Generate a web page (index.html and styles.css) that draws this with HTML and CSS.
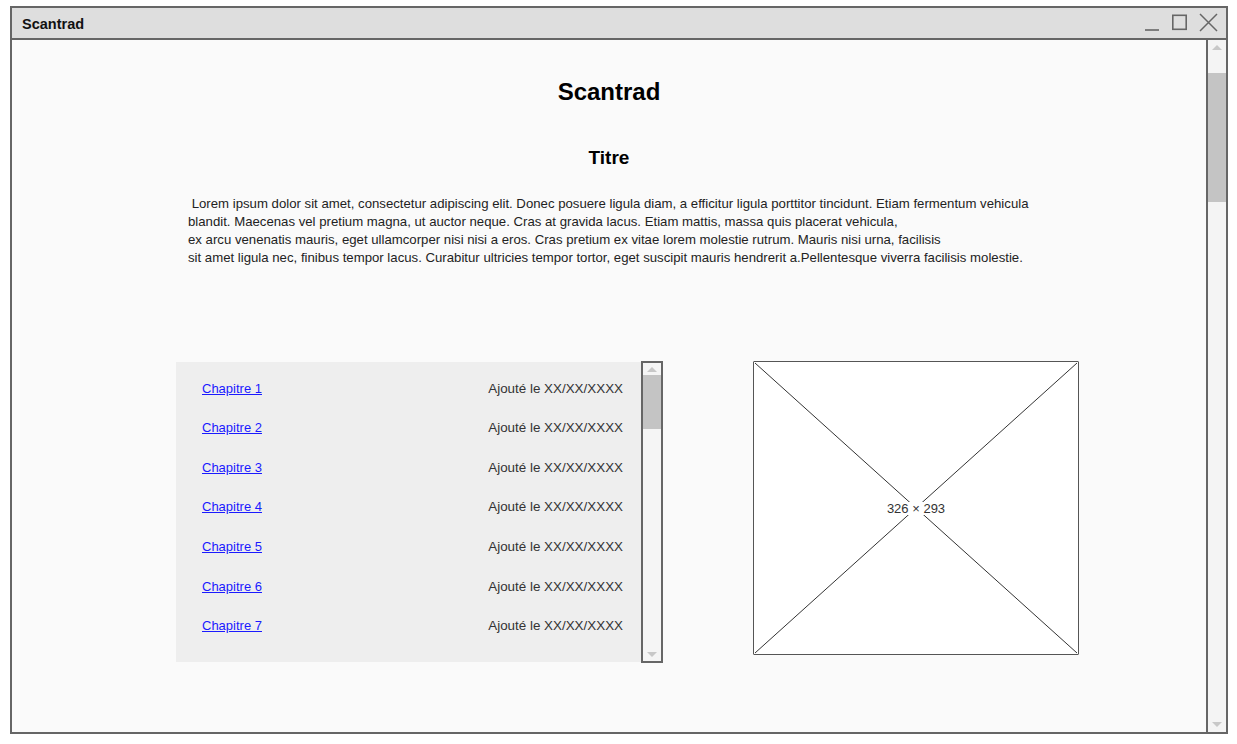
FILE: index.html
```html
<!DOCTYPE html>
<html lang="fr">
<head>
<meta charset="utf-8">
<title>Scantrad</title>
<link rel="stylesheet" href="styles.css">
</head>
<body>
<div class="window">
  <div class="titlebar">
    <span class="win-title">Scantrad</span>
    <svg class="controls" width="76" height="20" viewBox="0 0 76 20">
      <line x1="2" y1="17" x2="16" y2="17" stroke="#666" stroke-width="1.6"/>
      <rect x="29.8" y="2.3" width="13.4" height="14" fill="none" stroke="#666" stroke-width="1.6"/>
      <path d="M57 1 L74 18 M74 1 L57 18" stroke="#666" stroke-width="1.5" fill="none"/>
    </svg>
  </div>
  <div class="body">
    <main class="content">
      <h1 class="page-title">Scantrad</h1>
      <h2 class="sub-title">Titre</h2>
      <p class="intro">&nbsp;Lorem ipsum dolor sit amet, consectetur adipiscing elit. Donec posuere ligula diam, a efficitur ligula porttitor tincidunt. Etiam fermentum vehicula<br>blandit. Maecenas vel pretium magna, ut auctor neque. Cras at gravida lacus. Etiam mattis, massa quis placerat vehicula,<br>ex arcu venenatis mauris, eget ullamcorper nisi nisi a eros. Cras pretium ex vitae lorem molestie rutrum. Mauris nisi urna, facilisis<br>sit amet ligula nec, finibus tempor lacus. Curabitur ultricies tempor tortor, eget suscipit mauris hendrerit a.Pellentesque viverra facilisis molestie.</p>
      <div class="lower">
        <div class="listbox">
          <ul class="chapters">
            <li class="row"><a href="#">Chapitre 1</a><span class="date">Ajouté le XX/XX/XXXX</span></li>
            <li class="row"><a href="#">Chapitre 2</a><span class="date">Ajouté le XX/XX/XXXX</span></li>
            <li class="row"><a href="#">Chapitre 3</a><span class="date">Ajouté le XX/XX/XXXX</span></li>
            <li class="row"><a href="#">Chapitre 4</a><span class="date">Ajouté le XX/XX/XXXX</span></li>
            <li class="row"><a href="#">Chapitre 5</a><span class="date">Ajouté le XX/XX/XXXX</span></li>
            <li class="row"><a href="#">Chapitre 6</a><span class="date">Ajouté le XX/XX/XXXX</span></li>
            <li class="row"><a href="#">Chapitre 7</a><span class="date">Ajouté le XX/XX/XXXX</span></li>
          </ul>
          <div class="mini-scroll">
            <span class="arrow-up"></span>
            <span class="mini-thumb"></span>
            <span class="spacer"></span>
            <span class="arrow-down"></span>
          </div>
        </div>
        <div class="placeholder">
          <svg class="cross" width="326" height="294" viewBox="0 0 326 294" preserveAspectRatio="none">
            <line x1="2" y1="2" x2="324" y2="292" stroke="#333" stroke-width="1"/>
            <line x1="324" y1="2" x2="2" y2="292" stroke="#333" stroke-width="1"/>
          </svg>
          <span class="dims">326 × 293</span>
        </div>
      </div>
    </main>
    <div class="scrollbar">
      <span class="arrow-up"></span>
      <span class="thumb"></span>
      <span class="spacer"></span>
      <span class="arrow-down"></span>
    </div>
  </div>
</div>
</body>
</html>
```
FILE: styles.css
```css
html, body {
  margin: 0;
  padding: 0;
  background: #ffffff;
  font-family: "Liberation Sans", Arial, sans-serif;
}

.window {
  margin: 6px 0 0 10px;
  width: 1218px;
  height: 728px;
  box-sizing: border-box;
  border: 2px solid #666;
  display: flex;
  flex-direction: column;
  background: #fafafa;
}

.titlebar {
  height: 30px;
  flex: none;
  background: #dedede;
  border-bottom: 2px solid #666;
  display: flex;
  align-items: center;
  justify-content: space-between;
  padding: 0 7px 0 10px;
}

.win-title {
  font-weight: bold;
  font-size: 14.5px;
  color: #111;
  padding-top: 1px;
}

.controls {
  display: block;
}

.body {
  flex: 1;
  display: flex;
  min-height: 0;
}

.content {
  flex: 1;
  display: flex;
  flex-direction: column;
  align-items: center;
}

.page-title {
  margin: 38px 0 0 0;
  font-size: 24px;
  line-height: 28px;
  font-weight: bold;
  color: #000;
}

.sub-title {
  margin: 41px 0 0 0;
  font-size: 19px;
  line-height: 22px;
  font-weight: bold;
  color: #000;
}

.intro {
  align-self: flex-start;
  margin: 26px 0 0 176px;
  font-size: 13.2px;
  line-height: 18px;
  color: #222;
}

.lower {
  align-self: flex-start;
  margin: 94px 0 0 164px;
  display: flex;
  align-items: flex-start;
  gap: 90px;
}

.listbox {
  display: flex;
  height: 302px;
}

.chapters {
  list-style: none;
  margin: 1px 0 1px 0;
  padding: 6.2px 18px 0 26px;
  width: 465px;
  box-sizing: border-box;
  background: #eeeeee;
}

.row {
  height: 39.67px;
  display: flex;
  align-items: center;
  justify-content: space-between;
  font-size: 13px;
}

.row a {
  color: #1a1aff;
  text-decoration: underline;
}

.date {
  color: #333;
  font-size: 13.4px;
}

.mini-scroll {
  width: 18px;
  border: 2px solid #666;
  background: #f5f5f5;
  display: flex;
  flex-direction: column;
  align-items: center;
  box-sizing: content-box;
  height: 298px;
}

.mini-scroll .arrow-up {
  margin: 4px 0 3px 0;
  width: 0;
  height: 0;
  border-left: 5px solid transparent;
  border-right: 5px solid transparent;
  border-bottom: 5px solid #c8c8c8;
}

.mini-thumb {
  width: 18px;
  height: 54px;
  background: #c4c4c4;
}

.spacer {
  flex: 1;
}

.mini-scroll .arrow-down {
  margin: 0 0 4px 0;
  width: 0;
  height: 0;
  border-left: 5px solid transparent;
  border-right: 5px solid transparent;
  border-top: 5px solid #c8c8c8;
}

.placeholder {
  position: relative;
  width: 326px;
  height: 294px;
  box-sizing: border-box;
  background: #fff;
  border: 1.5px solid #555;
  border-radius: 1px;
  display: flex;
  align-items: center;
  justify-content: center;
}

.cross {
  position: absolute;
  left: -1px;
  top: -1px;
}

.dims {
  position: relative;
  font-size: 13px;
  color: #333;
  background: #fff;
  padding: 0 2px;
  line-height: 13px;
}

.scrollbar {
  width: 18px;
  border-left: 2px solid #666;
  background: #f4f4f4;
  display: flex;
  flex-direction: column;
  align-items: center;
}

.scrollbar .arrow-up {
  margin: 5px 0 0 0;
  width: 0;
  height: 0;
  border-left: 5px solid transparent;
  border-right: 5px solid transparent;
  border-bottom: 5px solid #c8c8c8;
}

.thumb {
  margin-top: 23px;
  width: 18px;
  height: 129px;
  background: #c4c4c4;
}

.scrollbar .arrow-down {
  margin: 0 0 5px 0;
  width: 0;
  height: 0;
  border-left: 5px solid transparent;
  border-right: 5px solid transparent;
  border-top: 5px solid #c8c8c8;
}
```
